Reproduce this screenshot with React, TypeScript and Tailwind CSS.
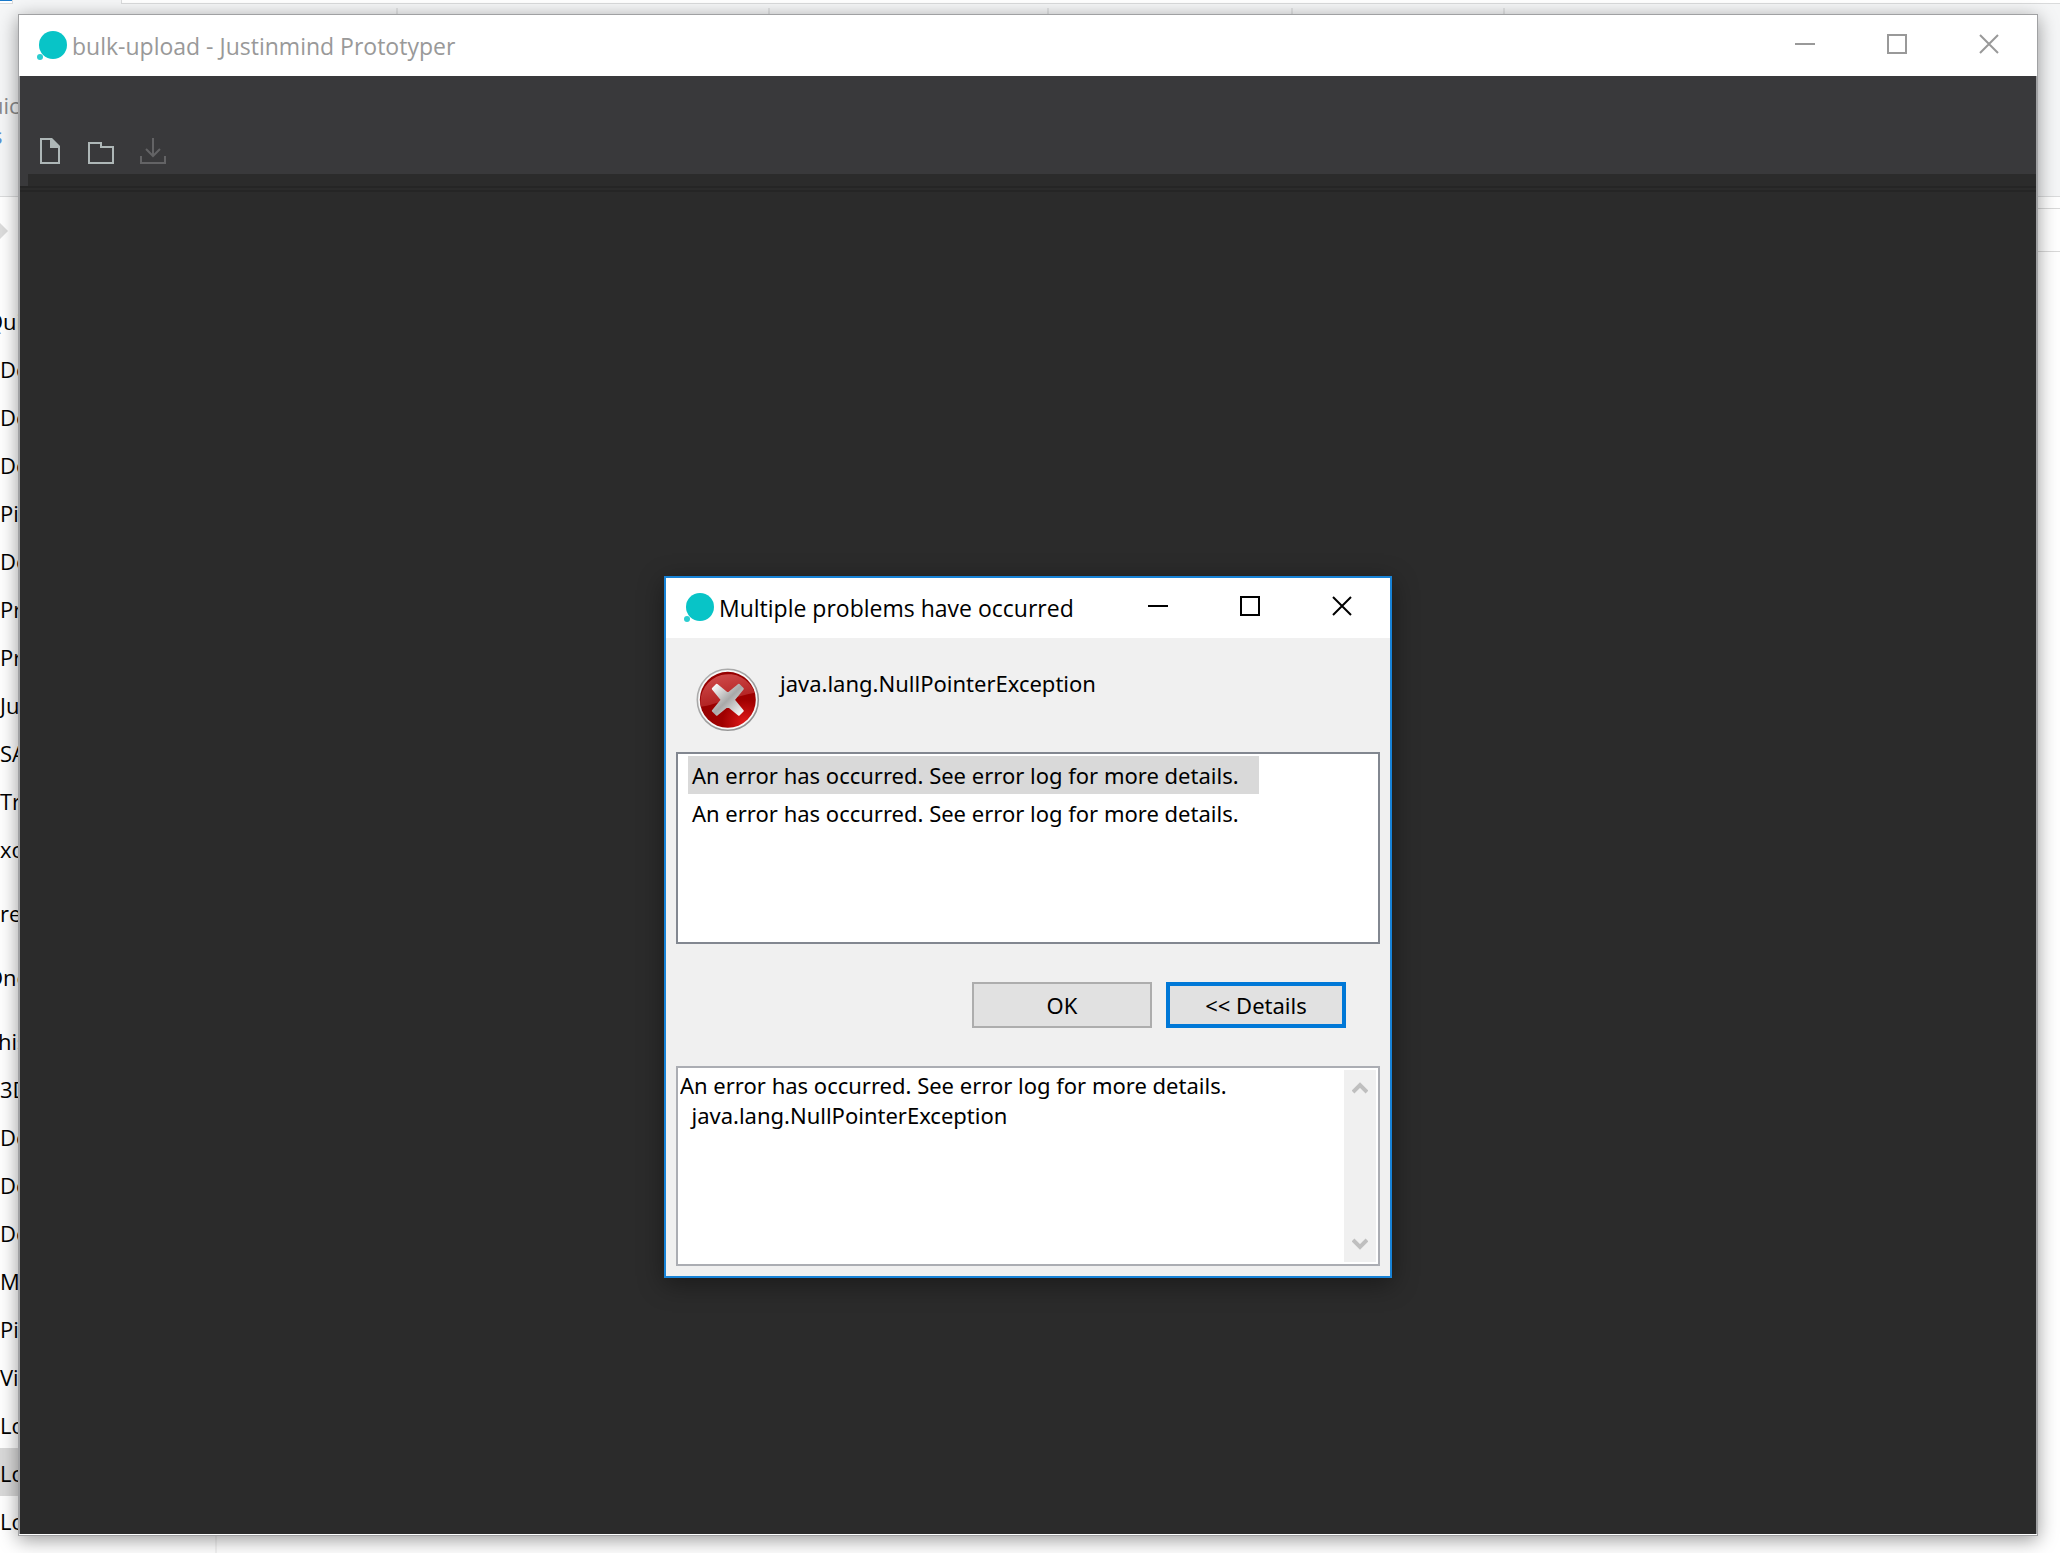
/**
 * App.tsx
 *
 * Prototyper main window with the "Multiple problems have occurred" dialog on top.
 * The file explorer behind it only shows around the window edges.
 */

import { useState } from 'react';
import type { ReactNode } from 'react';

const DETAILS_TEXT =
	'An error has occurred. See error log for more details.\n  java.lang.NullPointerException';

const PROBLEMS = [
	'An error has occurred. See error log for more details.',
	'An error has occurred. See error log for more details.',
];

interface NavGroup {
	title: string;
	items: string[];
	/** Margin class that scrolls the group title under the left screen edge */
	offset: string;
}

const NAV_GROUPS: NavGroup[] = [
	{
		title: 'Qui',
		items: ['De', 'De', 'De', 'Pi', 'De', 'Pr', 'Pr', 'Ju', 'SA', 'Tr', 'xo'],
		offset: '-ml-3.5',
	},
	{ title: 're', items: [], offset: 'ml-0' },
	{ title: 'One', items: [], offset: '-ml-3.5' },
	{
		title: 'his',
		items: ['3D', 'De', 'De', 'De', 'M', 'Pi', 'Vi', 'Lo', 'Lo', 'Lo'],
		offset: '-ml-0.5',
	},
];

/** Index of the highlighted drive inside the last group */
const SELECTED_DRIVE = 8;

function Logo() {
	return (
		<svg className="h-8 w-8 shrink-0" viewBox="0 0 32 32" aria-hidden="true">
			<circle cx="17" cy="15" r="14" fill="#08c4c7" />
			<circle cx="4" cy="27" r="3" fill="#2bcdd0" />
		</svg>
	);
}

interface TitleBarProps {
	title: string;
	/** Height, padding and text colour of the bar */
	className: string;
}

function TitleBar({ title, className }: TitleBarProps) {
	return (
		<header className={`flex shrink-0 items-start bg-white pr-[2px] pl-[17px] ${className}`}>
			<div className="flex h-[60px] flex-1 items-center gap-1">
				<Logo />
				<h1 className="text-[23px] leading-8">{title}</h1>
			</div>
			<div className="flex h-14">
				<CaptionButton label="Minimize">
					<path d="M0 10h20" />
				</CaptionButton>
				<CaptionButton label="Maximize">
					<path d="M1 1h18v18H1z" />
				</CaptionButton>
				<CaptionButton label="Close">
					<path d="M1 1l18 18M19 1L1 19" />
				</CaptionButton>
			</div>
		</header>
	);
}

function CaptionButton({ label, children }: { label: string; children: ReactNode }) {
	return (
		<button type="button" aria-label={label} className="flex w-[92px] items-center justify-center">
			<svg
				className="h-5 w-5"
				viewBox="0 0 20 20"
				fill="none"
				stroke="currentColor"
				strokeWidth="2"
			>
				{children}
			</svg>
		</button>
	);
}

function ErrorIcon() {
	return (
		<svg className="h-16 w-16 shrink-0" viewBox="0 0 64 64" aria-hidden="true">
			<defs>
				<linearGradient id="ring" x1="0" y1="0" x2="1" y2="1">
					<stop offset="0" stopColor="#b4b4b4" />
					<stop offset="1" stopColor="#8c8c8c" />
				</linearGradient>
				<radialGradient id="ball" cx="0.8" cy="0.9" r="0.8">
					<stop offset="0" stopColor="#e01a1a" />
					<stop offset="0.5" stopColor="#a00000" />
					<stop offset="1" stopColor="#960000" />
				</radialGradient>
				<linearGradient id="gloss" x1="0.2" y1="0" x2="0.6" y2="1">
					<stop offset="0" stopColor="#e06060" />
					<stop offset="1" stopColor="#b02020" />
				</linearGradient>
				<linearGradient id="cross" x1="0" y1="0" x2="1" y2="1">
					<stop offset="0" stopColor="#ffffff" />
					<stop offset="0.5" stopColor="#a8a8a8" />
					<stop offset="1" stopColor="#ffffff" />
				</linearGradient>
			</defs>
			<g transform="translate(0.8 0.8)">
				<circle cx="31" cy="31" r="30.5" fill="#f8f8f8" stroke="url(#ring)" strokeWidth="1.6" />
				<circle cx="31" cy="31" r="28" fill="url(#ball)" />
				<path d="M4 38a28 28 0 0 1 54-14C48 26 40 28 31 31 20 34 12 37 4 38z" fill="url(#gloss)" opacity="0.8" />
				<path
					d="M16 20l4-4 11 9 11-9 4 4-9 11 9 11-4 4-11-9-11 9-4-4 9-11z"
					fill="url(#cross)"
					stroke="url(#cross)"
					strokeWidth="2"
					strokeLinejoin="round"
				/>
			</g>
		</svg>
	);
}

function Explorer() {
	return (
		<div className="flex min-h-screen flex-col bg-white text-[22px] text-black">
			<div className="flex h-1 shrink-0 bg-[#f5f6f7]">
				<div className="w-[13px] border-r border-b border-[#dadbdc] bg-white">
					<div className="h-px bg-[#1979ca]" />
				</div>
				<div className="ml-[108px] flex-1 border-b border-l border-[#dadbdc] bg-white" />
			</div>
			<div className="flex h-[193px] shrink-0 border-b border-[#dadbdc] bg-[#f5f6f7]">
				<div className="w-[396px] pt-[86px] leading-[30px] text-[#8a8a8a]">
					<p className="-ml-2.5">uic</p>
					<p className="-ml-2 text-[#5b8fd0]">s</p>
				</div>
				<div className="mt-1 h-4 w-[372px] border-l-2 border-[#e2e3e4]" />
				<div className="mt-1 h-4 w-[279px] border-l-2 border-[#e2e3e4]" />
				<div className="mt-1 h-4 w-[244px] border-l-2 border-[#e2e3e4]" />
				<div className="mt-1 h-4 w-[212px] border-l-2 border-[#e2e3e4]" />
				<div className="mt-1 h-4 border-l-2 border-[#e2e3e4]" />
			</div>
			<div className="flex h-[99px] shrink-0 pt-[11px]">
				<svg className="mt-3 h-5 w-2" viewBox="0 0 8 20" aria-hidden="true">
					<path d="M0 3l8 8-8 8z" fill="#dcdcdc" />
				</svg>
				<div className="ml-52 h-11 flex-1 border-y border-[#d9d9d9]" />
			</div>
			<div className="flex flex-1">
				<nav className="flex w-[215px] flex-col gap-4">
					{NAV_GROUPS.map((group) => (
						<section key={group.title}>
							<h2 className={`h-12 leading-[50px] ${group.offset}`}>{group.title}</h2>
							<ul>
								{group.items.map((item, i) => (
									<li
										key={i}
										className={`h-12 leading-[50px] ${
											group.items.length === 10 && i === SELECTED_DRIVE ? 'bg-[#d9d9d9]' : ''
										}`}
									>
										{item}
									</li>
								))}
							</ul>
						</section>
					))}
				</nav>
				<div className="flex-1 border-l-2 border-[#f3f3f3]" />
			</div>
		</div>
	);
}

function Toolbar() {
	return (
		<div className="flex h-[98px] shrink-0 items-end gap-6 bg-[#39393b] pb-[9px] pl-[17px] text-[#aeb7b7]">
			<button type="button" aria-label="New">
				<svg className="h-8 w-[26px]" viewBox="0 0 26 32" fill="none" stroke="currentColor" strokeWidth="2">
					<path d="M4 6h10l8 8v16H4z" />
					<path d="M13 5h2l8 8v2H13z" fill="currentColor" stroke="none" />
				</svg>
			</button>
			<button type="button" aria-label="Open">
				<svg className="h-8 w-7" viewBox="0 0 28 32" fill="none" stroke="currentColor" strokeWidth="2">
					<path d="M2 10h12v4h12v16H2z" />
				</svg>
			</button>
			<button type="button" aria-label="Save" disabled className="text-[#636365]">
				<svg className="h-8 w-7" viewBox="0 0 28 32" fill="none" stroke="currentColor" strokeWidth="2">
					<path d="M2 23v7h24v-7M14 5v18M7 16l7 7 7-7" />
				</svg>
			</button>
		</div>
	);
}

interface ErrorDialogProps {
	selected: number;
	onSelect: (index: number) => void;
}

function ErrorDialog({ selected, onSelect }: ErrorDialogProps) {
	return (
		<div
			role="dialog"
			aria-label="Multiple problems have occurred"
			className="absolute top-[561px] left-1/2 flex w-[728px] -translate-x-1/2 flex-col border-2 border-[#1883d7] bg-[#f0f0f0] text-[22px] text-black shadow-[0_6px_24px_rgba(0,0,0,0.4)]"
		>
			<TitleBar title="Multiple problems have occurred" className="h-[60px] text-black" />

			<div className="flex flex-col px-[10px] pb-[10px] font-['Noto_Sans','Open_Sans',sans-serif]">
				<div className="flex gap-5 pt-[30px] pb-5 pl-5">
					<ErrorIcon />
					<p className="leading-[30px]">java.lang.NullPointerException</p>
				</div>

				<ul className="h-48 border-2 border-[#828790] bg-white px-[10px] pt-[2px]">
					{PROBLEMS.map((problem, i) => (
						<li key={i}>
							<button
								type="button"
								onClick={() => onSelect(i)}
								className={`h-[38px] pr-5 pl-1 text-left ${selected === i ? 'bg-[#d9d9d9]' : ''}`}
							>
								{problem}
							</button>
						</li>
					))}
				</ul>

				<div className="flex justify-end gap-[14px] py-[38px] pr-[34px]">
					<button type="button" className="h-[46px] w-[180px] border-2 border-[#adadad] bg-[#e1e1e1]">
						OK
					</button>
					<button type="button" className="h-[46px] w-[180px] border-4 border-[#0078d7] bg-[#e1e1e1]">
						&lt;&lt; Details
					</button>
				</div>

				<div className="flex h-[200px] border-2 border-[#abadb3] bg-white p-[2px]">
					<textarea
						readOnly
						aria-label="Details"
						value={DETAILS_TEXT}
						className="flex-1 resize-none overflow-hidden leading-[30px] outline-none"
					/>
					<div className="flex w-8 flex-col justify-between bg-[#f0f0f0] text-[#bfbfbf]">
						<button type="button" aria-label="Scroll up" className="flex h-9 items-center justify-center">
							<svg className="h-3 w-4" viewBox="0 0 16 12" fill="none" stroke="currentColor" strokeWidth="4">
								<path d="M1 10l7-7 7 7" />
							</svg>
						</button>
						<button type="button" aria-label="Scroll down" className="flex h-9 items-center justify-center">
							<svg className="h-3 w-4" viewBox="0 0 16 12" fill="none" stroke="currentColor" strokeWidth="4">
								<path d="M1 2l7 7 7-7" />
							</svg>
						</button>
					</div>
				</div>
			</div>
		</div>
	);
}

export default function App() {
	const [selected, setSelected] = useState(0);

	return (
		<div className="relative min-h-screen overflow-hidden font-['Open_Sans','Noto_Sans',sans-serif]">
			<Explorer />

			{/* Main window */}
			<div className="absolute top-[14px] right-[22px] bottom-[17px] left-[18px] flex flex-col border border-[#a0a1a3] bg-white pb-px shadow-[0_4px_18px_rgba(0,0,0,0.4)]">
				<TitleBar title="bulk-upload - Justinmind Prototyper" className="h-[61px] pt-px text-[#999999]" />
				<main className="flex flex-1 flex-col border-x border-[#a0a1a3] bg-[#2b2b2b]">
					<Toolbar />
					<div className="h-3 shrink-0 border-l-8 border-[#39393b]" />
					<div className="h-[6px] shrink-0 border-y-2 border-[#252525]" />
				</main>
				<ErrorDialog selected={selected} onSelect={setSelected} />
			</div>
		</div>
	);
}
